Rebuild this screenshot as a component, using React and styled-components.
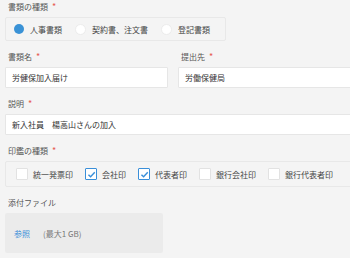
import React from "react";
import styled, { createGlobalStyle } from "styled-components";

const GlobalStyle = createGlobalStyle`
  html, body {
    margin: 0;
    padding: 0;
    background: #f4f4f4;
    overflow: hidden;
  }
  body {
    font-family: "Noto Sans CJK JP", "Noto Sans", sans-serif;
    color: #333;
  }
`;

const docTypes = [
  { label: "人事書類", checked: true },
  { label: "契約書、注文書", checked: false },
  { label: "登記書類", checked: false },
];

const seals = [
  { label: "統一発票印", checked: false },
  { label: "会社印", checked: true },
  { label: "代表者印", checked: true },
  { label: "銀行会社印", checked: false },
  { label: "銀行代表者印", checked: false },
];

export default function App() {
  return (
    <>
      <GlobalStyle />
      <Page>
        <Field>
          <Label required>書類の種類</Label>
          <OptionBox>
            {docTypes.map((t) => (
              <Option key={t.label}>
                <Radio checked={t.checked} />
                <span>{t.label}</span>
              </Option>
            ))}
          </OptionBox>
        </Field>

        <Row>
          <Field>
            <Label required>書類名</Label>
            <Input defaultValue="労健保加入届け" />
          </Field>
          <Field>
            <Label required>提出先</Label>
            <Input defaultValue="労働保健局" />
          </Field>
        </Row>

        <Field>
          <Label required>説明</Label>
          <Input defaultValue="新入社員　楊高山さんの加入" />
        </Field>

        <Field>
          <Label required>印鑑の種類</Label>
          <OptionBox wide>
            {seals.map((s) => (
              <Option key={s.label} tight>
                <Check checked={s.checked}>
                  {s.checked && (
                    <svg width="9" height="9" viewBox="0 0 10 10">
                      <path
                        d="M1.6 5.2 L4 7.5 L8.6 2.6"
                        fill="none"
                        stroke="#3a8fd9"
                        strokeWidth="1.6"
                      />
                    </svg>
                  )}
                </Check>
                <span>{s.label}</span>
              </Option>
            ))}
          </OptionBox>
        </Field>

        <Field>
          <Label>添付ファイル</Label>
          <FileBox>
            <Browse>参照</Browse>
            <Limit>(最大1 GB)</Limit>
          </FileBox>
        </Field>
      </Page>
    </>
  );
}

const Page = styled.div`
  width: 360px;
  padding: 1px 0 0 5px;
  display: flex;
  flex-direction: column;
  gap: 10px;
`;

const Field = styled.div`
  display: flex;
  flex-direction: column;
  gap: 4px;
`;

const Row = styled.div`
  display: grid;
  grid-template-columns: 163px 1fr;
  gap: 10px;
`;

const Label = styled.div`
  font-size: 8px;
  line-height: 12px;
  color: #555;
  padding-left: 3px;
  &:after {
    content: ${(p) => (p.required ? '"*"' : '""')};
    color: #e65a4f;
    margin-left: 4px;
    font-size: 9px;
  }
`;

const OptionBox = styled.div`
  display: flex;
  align-items: center;
  gap: ${(p) => (p.wide ? "12px" : "13px")};
  height: ${(p) => (p.wide ? "24px" : "22px")};
  padding: ${(p) => (p.wide ? "0 10px" : "0 15px 0 8px")};
  width: ${(p) => (p.wide ? "auto" : "fit-content")};
  border: 1px solid #e8e8e8;
  border-radius: 2px;
  background: #f4f4f4;
`;

const Option = styled.label`
  display: flex;
  align-items: center;
  gap: ${(p) => (p.tight ? "5px" : "6px")};
  font-size: 8px;
  color: #444;
  white-space: nowrap;
`;

const Radio = styled.span`
  width: ${(p) => (p.checked ? "10px" : "11px")};
  height: ${(p) => (p.checked ? "10px" : "11px")};
  border-radius: 50%;
  background: ${(p) => (p.checked ? "#3a92d6" : "#fff")};
  border: ${(p) => (p.checked ? "0" : "1px solid #ececec")};
  box-sizing: border-box;
`;

const Check = styled.span`
  width: 12px;
  height: 12px;
  box-sizing: border-box;
  border: 1px solid ${(p) => (p.checked ? "#3a8fd9" : "#e2e2e2")};
  border-radius: 1px;
  background: #fff;
  display: flex;
  align-items: center;
  justify-content: center;
`;

const Input = styled.input`
  height: 21px;
  box-sizing: border-box;
  border: 1px solid #e6e6e6;
  border-radius: 1px;
  background: #fff;
  padding: 0 6px;
  font-family: inherit;
  font-size: 8px;
  color: #333;
  outline: none;
`;

const FileBox = styled.div`
  width: 158px;
  height: 40px;
  box-sizing: border-box;
  background: #ebebeb;
  border-radius: 2px;
  display: flex;
  align-items: center;
  gap: 13px;
  padding-left: 9px;
  font-size: 8px;
`;

const Browse = styled.span`
  color: #3a8fd9;
`;

const Limit = styled.span`
  color: #777;
`;
